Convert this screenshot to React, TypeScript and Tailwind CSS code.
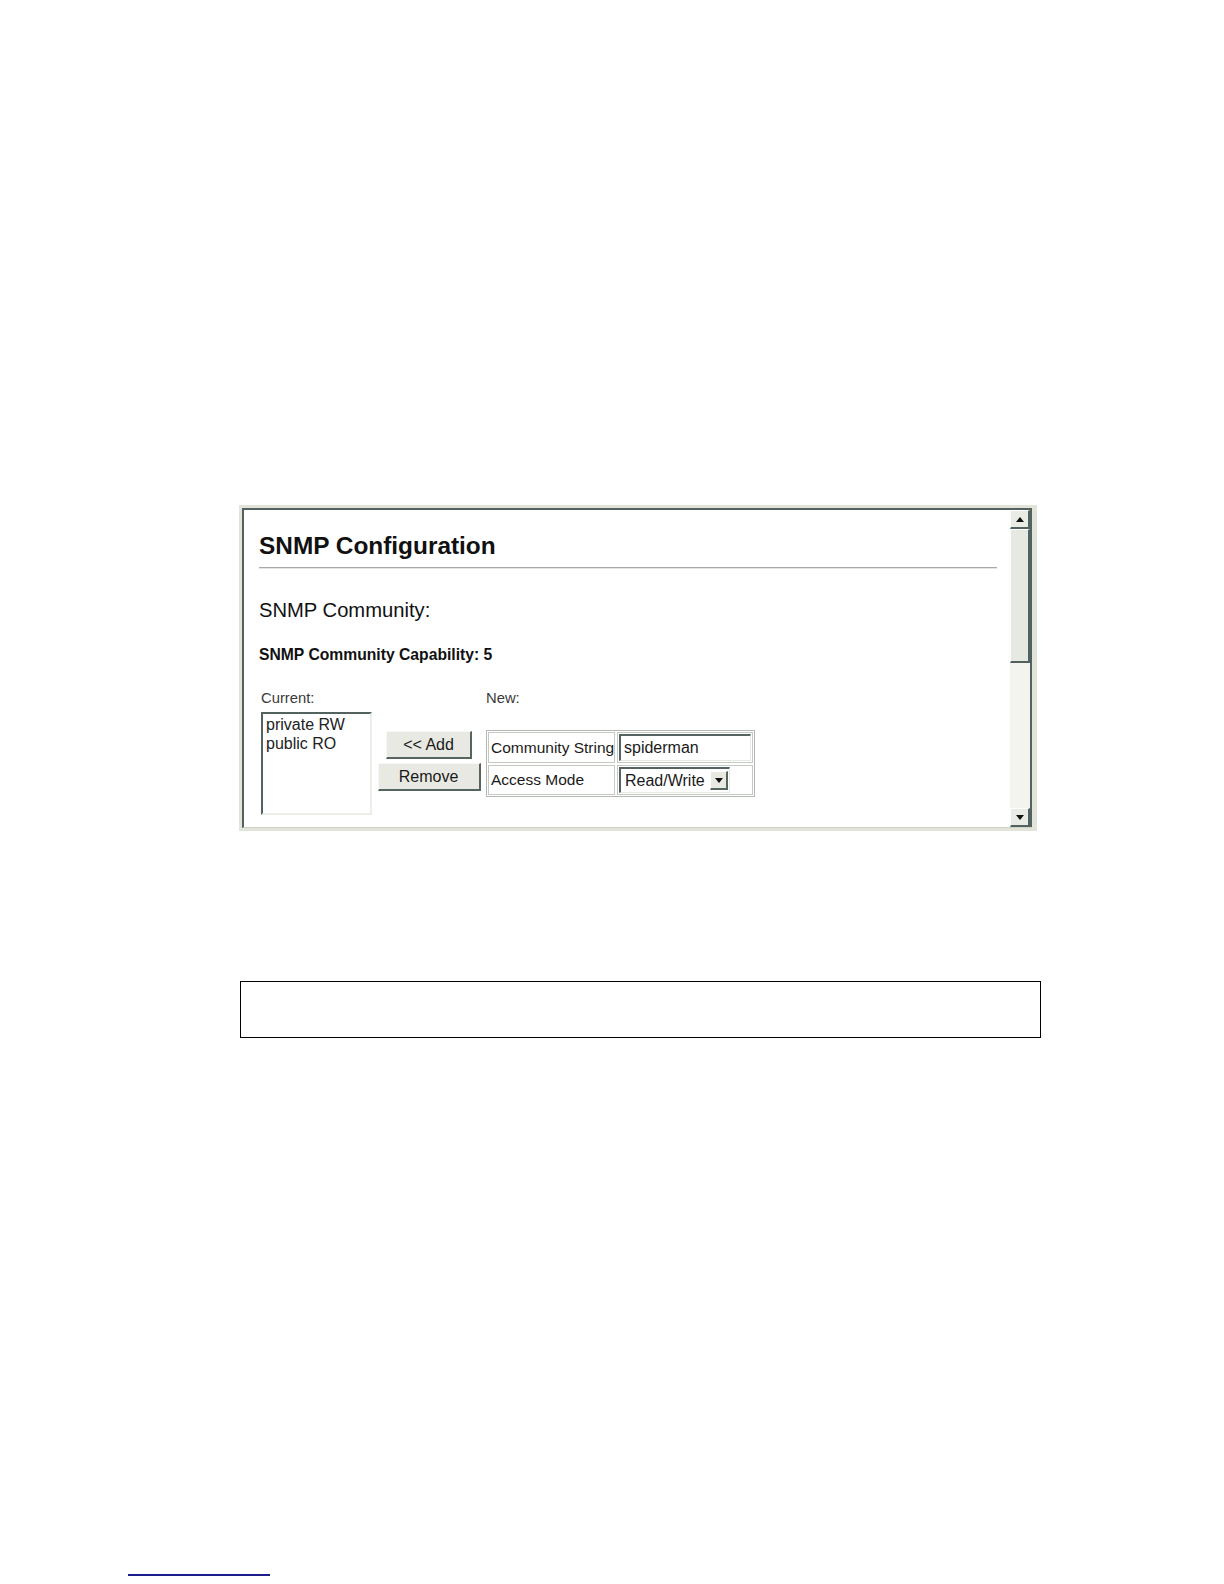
import React from "react"

const font = { fontFamily: '"Liberation Sans", Arial, sans-serif' }

function Arrow({ up }: { up?: boolean }) {
  return (
    <svg width="8" height="5" viewBox="0 0 8 5">
      <path d={up ? "M4 0 L8 5 L0 5 Z" : "M0 0 L8 0 L4 5 Z"} fill="#111" />
    </svg>
  )
}

function Scrollbar() {
  return (
    <div className="w-[22px] shrink-0 flex flex-col bg-[#f3f4ef] border-r-2 border-[#51625f]">
      <div className="h-[19px] flex items-center justify-center bg-[#e9ebe5] border-t border-l border-white border-b-2 border-r-2 border-b-[#51625f] border-r-[#51625f]">
        <Arrow up />
      </div>
      <div className="h-[134px] bg-[#e6e8e2] border-t border-l border-white border-b-2 border-r-2 border-b-[#51625f] border-r-[#51625f]" />
      <div className="flex-1" />
      <div className="h-[19px] flex items-center justify-center bg-[#e9ebe5] border-t border-l border-white border-b-2 border-r-2 border-b-[#51625f] border-r-[#51625f]">
        <Arrow />
      </div>
    </div>
  )
}

function Button({ label, className }: { label: string; className: string }) {
  return (
    <div
      className={
        "h-[28px] flex items-center justify-center bg-[#e8e9e2] text-[16px] text-[#1a1a1a] border-t border-l border-[#f8f8f4] border-b-2 border-r-2 border-b-[#56665f] border-r-[#56665f] " +
        className
      }
    >
      {label}
    </div>
  )
}

export default function App() {
  return (
    <div className="w-[1224px] h-[1584px] bg-white pt-[505px]" style={font}>
      <div className="ml-[239px] w-[798px] h-[326px] border-[3px] border-r-[5px] border-[#e3e4d9] flex">
        <div className="flex-1 flex border-t-2 border-l-2 border-[#51625f] border-b border-b-[#cfd0c8] overflow-hidden">
          <div className="flex-1 pl-[15px] pr-[13px] pt-[22px] text-[#111]">
            <div className="text-[24.4px] leading-[28px] font-bold">SNMP Configuration</div>
            <div className="mt-[7px] h-[2px] border-t border-[#a8aca6] border-b border-b-[#e4e6e0]" />
            <div className="mt-[29px] text-[20.2px] leading-[24px]">SNMP Community:</div>
            <div className="mt-[24px] text-[15.7px] leading-[18px] font-bold">SNMP Community Capability: 5</div>
            <div className="mt-[26px] flex items-start">
              <div className="pl-[2px] flex flex-col">
                <div className="text-[14.8px] leading-[16px] text-[#3a3a3a]">Current:</div>
                <div className="mt-[6px] w-[111px] h-[103px] bg-white border-t-2 border-l-2 border-[#53635f] border-b-2 border-r-2 border-b-[#eceee8] border-r-[#eceee8] px-[3px] pt-[1px] text-[16px] leading-[19px] text-[#222]">
                  <div>private RW</div>
                  <div>public RO</div>
                </div>
              </div>
              <div className="w-[114px] pt-[41px] flex flex-col items-center gap-[4px]">
                <Button label="<< Add" className="w-[86px]" />
                <Button label="Remove" className="w-[103px]" />
              </div>
              <div className="flex flex-col">
                <div className="text-[14.8px] leading-[16px] text-[#3a3a3a]">New:</div>
                <div className="mt-[24px] w-[269px] border border-[#b3b8b2] p-[1px] flex flex-col gap-[2px] text-[15.5px] text-[#1a1a1a]">
                  <div className="flex gap-[2px] h-[31px]">
                    <div className="w-[127px] border border-[#c5c9c3] flex items-center pl-[2px] whitespace-nowrap">Community String</div>
                    <div className="flex-1 border border-[#c5c9c3] flex items-center p-[1px]">
                      <div className="w-full h-[27px] bg-white border-t-2 border-l-2 border-[#53635f] border-b border-r border-b-[#e6e8e2] border-r-[#e6e8e2] flex items-center pl-[3px] text-[16px]">
                        spiderman
                      </div>
                    </div>
                  </div>
                  <div className="flex gap-[2px] h-[30px]">
                    <div className="w-[127px] border border-[#c5c9c3] flex items-center pl-[2px]">Access Mode</div>
                    <div className="flex-1 border border-[#c5c9c3] flex items-center p-[1px]">
                      <div className="w-[111px] h-[26px] bg-white border-t-2 border-l-2 border-[#53635f] border-b border-r border-b-[#e6e8e2] border-r-[#e6e8e2] flex items-center justify-between pl-[4px] pr-[1px] text-[16px]">
                        <span>Read/Write</span>
                        <div className="w-[18px] h-[19px] flex items-center justify-center bg-[#e8e9e2] border-t border-l border-white border-b-2 border-r-2 border-b-[#56665f] border-r-[#56665f]">
                          <Arrow />
                        </div>
                      </div>
                    </div>
                  </div>
                </div>
              </div>
            </div>
          </div>
          <Scrollbar />
        </div>
      </div>

      <div className="mt-[150px] ml-[240px] w-[801px] h-[57px] border-[1.5px] border-black" />

      <div className="mt-[536px] ml-[128px] w-[142px] h-[2px] bg-[#1c1c8a]" />
    </div>
  )
}
